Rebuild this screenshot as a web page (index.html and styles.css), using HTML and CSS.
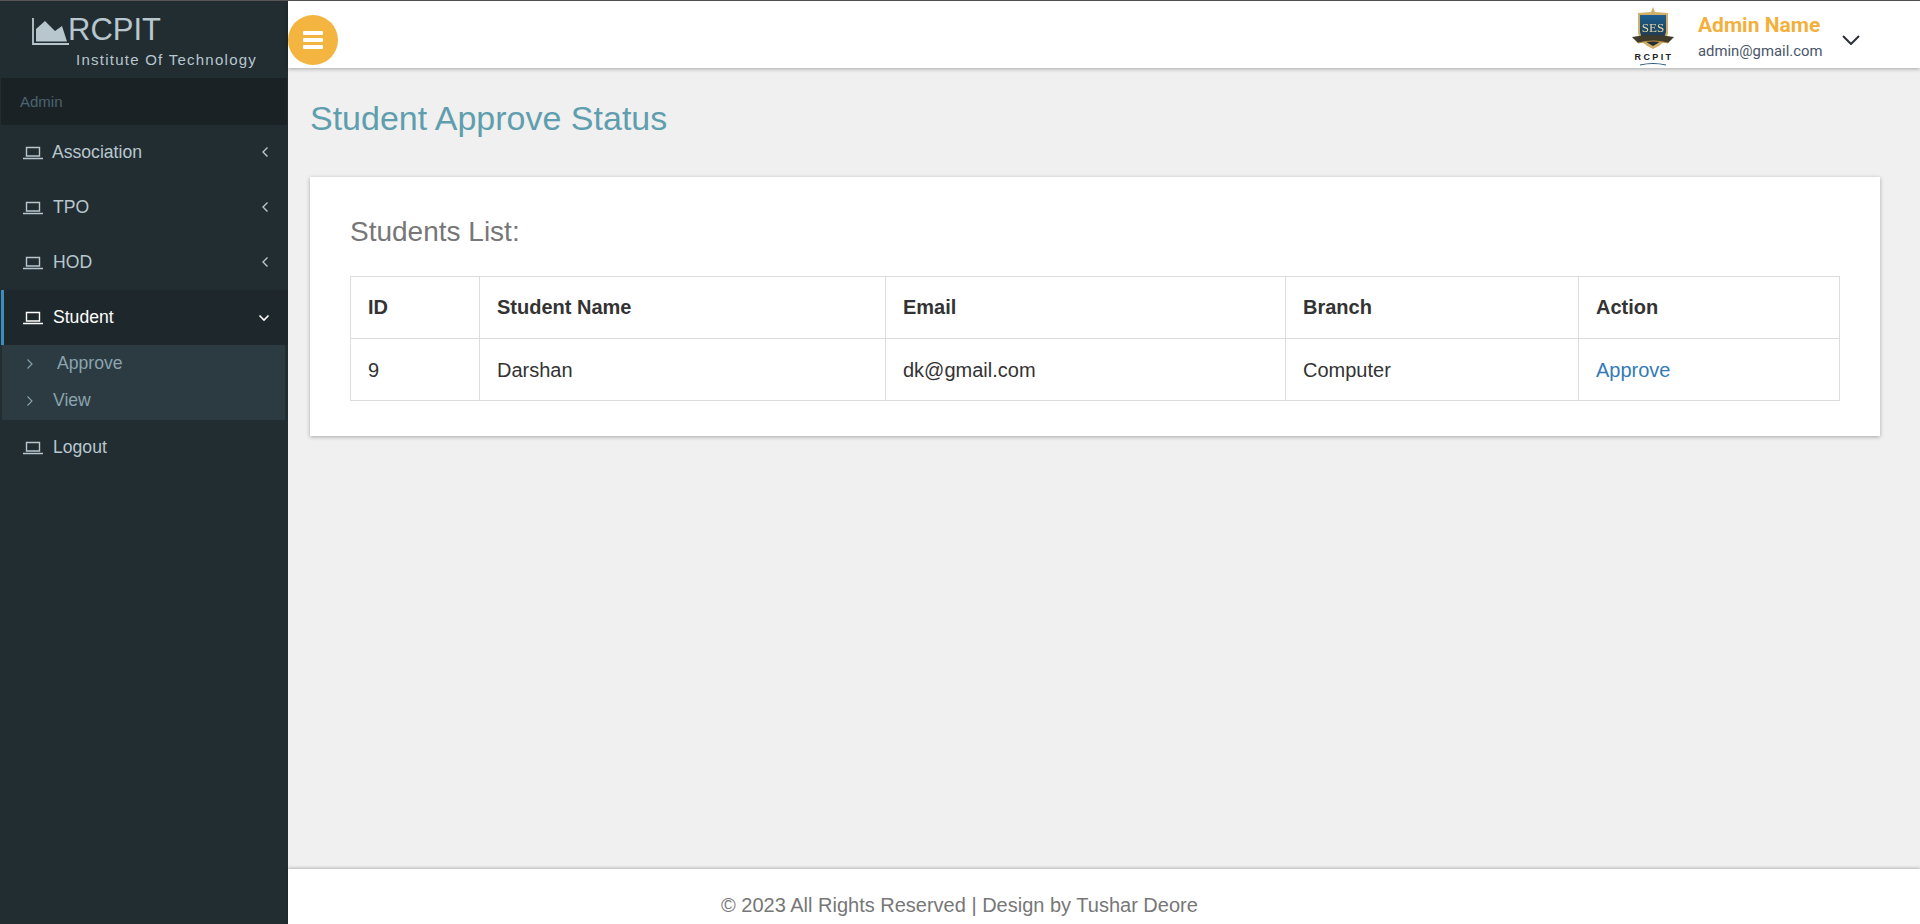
FILE: index.html
```html
<!DOCTYPE html>
<html lang="en">
<head>
<meta charset="utf-8">
<title>Student Approve Status</title>
<link rel="stylesheet" href="styles.css">
</head>
<body>
<div class="app">
  <aside class="sidebar">
    <div class="brand">
      <div class="brand-top">
        <svg class="brand-icon" viewBox="0 0 37 27" width="37" height="27"><path d="M1 0V26H37" fill="none" stroke="#b8c7ce" stroke-width="1.8"/><path d="M4 23.5V11L13 3L23 13L30 8L35 23.5Z" fill="#b8c7ce"/></svg>
        <span class="brand-name">RCPIT</span>
      </div>
      <div class="brand-sub">Institute Of Technology</div>
    </div>
    <div class="side-label">Admin</div>
    <ul class="menu">
      <li class="menu-item"><svg class="laptop" viewBox="0 0 20 14" width="20" height="14"><path d="M3.5 1.5H16.5V10H3.5ZM0 12.5H20" fill="none" stroke="currentColor" stroke-width="1.4"/></svg><span class="label first-label">Association</span><svg class="chev" viewBox="0 0 8 12" width="8" height="12"><path d="M6.5 1.5L2 6L6.5 10.5" fill="none" stroke="currentColor" stroke-width="1.4"/></svg></li>
      <li class="menu-item"><svg class="laptop" viewBox="0 0 20 14" width="20" height="14"><path d="M3.5 1.5H16.5V10H3.5ZM0 12.5H20" fill="none" stroke="currentColor" stroke-width="1.4"/></svg><span class="label">TPO</span><svg class="chev" viewBox="0 0 8 12" width="8" height="12"><path d="M6.5 1.5L2 6L6.5 10.5" fill="none" stroke="currentColor" stroke-width="1.4"/></svg></li>
      <li class="menu-item"><svg class="laptop" viewBox="0 0 20 14" width="20" height="14"><path d="M3.5 1.5H16.5V10H3.5ZM0 12.5H20" fill="none" stroke="currentColor" stroke-width="1.4"/></svg><span class="label">HOD</span><svg class="chev" viewBox="0 0 8 12" width="8" height="12"><path d="M6.5 1.5L2 6L6.5 10.5" fill="none" stroke="currentColor" stroke-width="1.4"/></svg></li>
      <li class="menu-item active"><svg class="laptop" viewBox="0 0 20 14" width="20" height="14"><path d="M3.5 1.5H16.5V10H3.5ZM0 12.5H20" fill="none" stroke="currentColor" stroke-width="1.4"/></svg><span class="label">Student</span><svg class="chev-down" viewBox="0 0 12 8" width="12" height="8"><path d="M1.5 1.5L6 6L10.5 1.5" fill="none" stroke="currentColor" stroke-width="1.6"/></svg></li>
      <li class="submenu">
        <div class="sub-item"><svg class="sub-chev" viewBox="0 0 8 12" width="8" height="12"><path d="M1.5 1.5L6 6L1.5 10.5" fill="none" stroke="currentColor" stroke-width="1.1"/></svg><span class="sub-first">Approve</span></div>
        <div class="sub-item"><svg class="sub-chev" viewBox="0 0 8 12" width="8" height="12"><path d="M1.5 1.5L6 6L1.5 10.5" fill="none" stroke="currentColor" stroke-width="1.1"/></svg><span>View</span></div>
      </li>
      <li class="menu-item"><svg class="laptop" viewBox="0 0 20 14" width="20" height="14"><path d="M3.5 1.5H16.5V10H3.5ZM0 12.5H20" fill="none" stroke="currentColor" stroke-width="1.4"/></svg><span class="label">Logout</span></li>
    </ul>
  </aside>
  <div class="main">
    <header class="topbar">
      <button class="burger" type="button"><span></span><span></span><span></span></button>
      <div class="user">
        <svg class="crest" viewBox="0 0 46 60" width="46" height="60">
          <defs><linearGradient id="sh" x1="0" y1="0" x2="0" y2="1"><stop offset="0" stop-color="#1c5f92"/><stop offset=".6" stop-color="#1f4058"/><stop offset="1" stop-color="#232a2c"/></linearGradient></defs>
          <g class="crest-art">
            <path d="M23 0L25 5L38 6V26Q37 36 23 42Q9 36 8 26V6L21 5Z" fill="#c69a44" opacity=".8"/>
            <path d="M10 8H36V25Q35 33 23 39Q11 33 10 25Z" fill="url(#sh)"/>
            <path d="M2 30Q23 26 44 30L38 36Q23 32 8 36Z" fill="#3f3a2a"/>
            <path d="M8 36Q23 32 38 36" fill="none" stroke="#b58a3c" stroke-width="1"/>
            <text x="23" y="25" class="crest-ses">SES</text>
          </g>
          <text x="24" y="53" class="crest-name">RCPIT</text>
          <path d="M10 58Q23 55 36 58" fill="none" stroke="#2b5a7a" stroke-width="1.2"/>
        </svg>
        <div class="user-text">
          <div class="user-name">Admin Name</div>
          <div class="user-mail">admin@gmail.com</div>
        </div>
        <svg class="user-chev" viewBox="0 0 18 10" width="18" height="10"><path d="M1 1L9 9L17 1" fill="none" stroke="#2b2f36" stroke-width="2"/></svg>
      </div>
    </header>
    <main class="content">
      <h1 class="page-title">Student Approve Status</h1>
      <section class="card">
        <h2 class="card-title">Students List:</h2>
        <table class="table">
          <colgroup><col class="c1"><col class="c2"><col class="c3"><col class="c4"><col class="c5"></colgroup>
          <thead><tr><th>ID</th><th>Student Name</th><th>Email</th><th>Branch</th><th>Action</th></tr></thead>
          <tbody><tr><td>9</td><td>Darshan</td><td>dk@gmail.com</td><td>Computer</td><td><a href="#">Approve</a></td></tr></tbody>
        </table>
      </section>
    </main>
    <footer class="footer">© 2023 All Rights Reserved | Design by Tushar Deore</footer>
  </div>
</div>
</body>
</html>
```

FILE: styles.css
```css
* { box-sizing: border-box; }
html, body { margin: 0; height: 100%; }
body { font-family: "Liberation Sans", Arial, sans-serif; background: #f0f0f0; overflow: hidden; }
.app { display: flex; height: 924px; border-top: 1px solid #555; }
.sidebar { width: 288px; flex: none; background: #222d32; color: #b8c7ce; }
.brand { height: 77px; padding: 15px 0 0 32px; }
.brand-top { display: flex; align-items: flex-end; height: 30px; }
.brand-icon { flex: none; margin-bottom: 1px; }
.brand-name { font-size: 31px; line-height: 32px; color: #b8c7ce; margin-left: -1px; }
.brand-sub { margin: 5px 0 0 44px; font-size: 15px; line-height: 18px; letter-spacing: 1.25px; color: #b8c7ce; white-space: nowrap; }
.side-label { height: 47px; margin: 0 1px; padding-left: 19px; background: #1a2226; color: #4b646f; font-size: 15px; line-height: 47px; }
.menu { list-style: none; margin: 0; padding: 0; }
.menu-item { display: flex; align-items: center; height: 55px; padding: 0 19px 0 23px; font-size: 17.6px; }
.laptop { flex: none; color: #b8c7ce; margin-right: 10px; }
.label { flex: 1; margin-top: -1px; }
.first-label { margin-left: -1px; }
.chev { flex: none; color: #b8c7ce; margin-top: -1px; }
.chev-down { flex: none; color: #fff; }
.active { background: #1e282c; color: #fff; border-left: 3px solid #3c8dbc; margin-left: 1px; padding-left: 19px; padding-right: 18px; }
.active .laptop { color: #fff; }
.submenu { margin: 0 3px 0 2px; height: 75px; background: #2c3b41; color: #8aa4af; font-size: 17.6px; }
.sub-item { display: flex; align-items: center; height: 37px; padding-left: 24px; }
.sub-chev { flex: none; margin-right: 19px; }
.sub-first { margin-left: 4px; }
.main { flex: 1; min-width: 0; display: flex; flex-direction: column; }
.topbar { height: 67px; flex: none; padding-top: 10px; background: #fff; box-shadow: 0 1px 4px rgba(0,0,0,.3); display: flex; align-items: center; justify-content: space-between; position: relative; }
.burger { width: 50px; height: 50px; padding: 0; border: 0; border-radius: 50%; background: #f4b440; display: flex; flex-direction: column; align-items: center; justify-content: center; gap: 3px; }
.burger span { display: block; width: 20px; height: 4px; background: #fff; border-radius: 1px; }
.user { display: flex; align-items: center; margin: -6px 60px 0 0; }
.crest { flex: none; margin-right: 22px; }
.crest-art { filter: blur(.35px); }
.crest-ses { font-family: "Liberation Serif", serif; font-size: 13px; fill: #e7d9a8; text-anchor: middle; }
.crest-name { font-family: "Liberation Sans", sans-serif; font-size: 9px; font-weight: 700; letter-spacing: 2.4px; fill: #222; text-anchor: middle; }
.user-text { width: 144px; }
.user-name { font-family: Roboto, sans-serif; font-weight: 700; font-size: 21px; line-height: 24px; color: #f4b03c; }
.user-mail { font-family: Roboto, sans-serif; font-size: 14.85px; line-height: 20px; margin-top: 4px; color: #4a5568; }
.user-chev { margin-top: 6px; }
.content { flex: 1; padding: 0 40px 0 22px; }
.page-title { margin: 29px 0 0; font-size: 34px; line-height: 42px; font-weight: 400; color: #5f9eae; }
.card { margin-top: 38px; height: 259px; padding: 37px 40px 0; background: #fff; box-shadow: 0 1px 4px rgba(0,0,0,.3); }
.card-title { margin: 0; font-size: 28px; line-height: 36px; font-weight: 400; color: #777; }
.table { margin-top: 26px; width: 100%; border-collapse: collapse; table-layout: fixed; font-size: 20px; color: #333; }
.table th, .table td { border: 1px solid #ddd; padding: 0 16px 0 17px; height: 62px; text-align: left; }
.table td { padding-top: 2px; }
.table th { font-weight: 700; }
.c1 { width: 129px; }
.c2 { width: 406px; }
.c3 { width: 400px; }
.c4 { width: 293px; }
.table a { color: #337ab7; text-decoration: none; }
.footer { height: 55px; flex: none; padding: 25px 0 0 433px; background: #fff; box-shadow: 0 -1px 3px rgba(0,0,0,.25); font-size: 20px; line-height: 22px; color: #777; }
```
